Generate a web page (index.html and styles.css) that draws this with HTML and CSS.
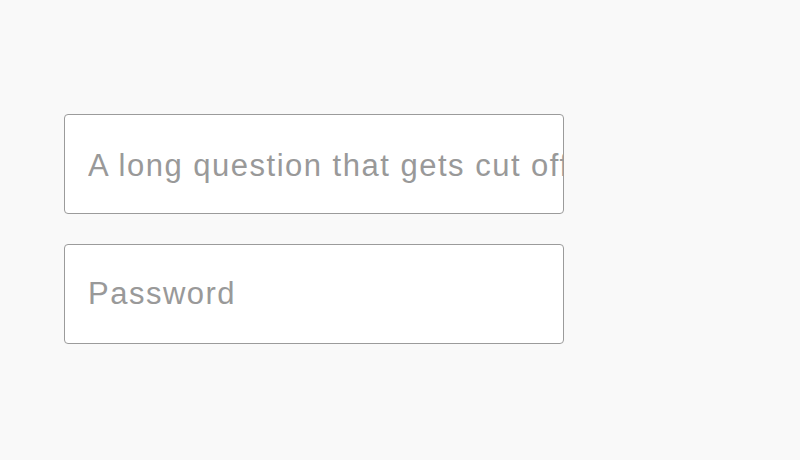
FILE: index.html
```html
<!DOCTYPE html>
<html>
<head>
<meta charset="utf-8">
<link rel="stylesheet" href="styles.css">
</head>
<body>
<form class="form">
  <input class="field field-question" type="text" placeholder="A long question that gets cut off">
  <input class="field" type="password" placeholder="Password">
</form>
</body>
</html>
```
FILE: styles.css
```css
html, body {
  margin: 0;
  padding: 0;
  background: #f9f9f9;
}
.form {
  display: flex;
  flex-direction: column;
  gap: 30px;
  padding: 114px 0 0 64px;
  margin: 0;
}
.field {
  box-sizing: border-box;
  width: 500px;
  height: 100px;
  margin: 0;
  padding: 0 0 1px 23px;
  border: 1px solid #9b9b9b;
  border-radius: 4px;
  background: #fff;
  font-family: "Liberation Sans", Arial, sans-serif;
  font-size: 31px;
  letter-spacing: 1.5px;
  color: #333;
  outline: none;
}
.field-question {
  padding-top: 4px;
  padding-bottom: 0;
}
.field::placeholder {
  color: #999;
  opacity: 1;
}
```
